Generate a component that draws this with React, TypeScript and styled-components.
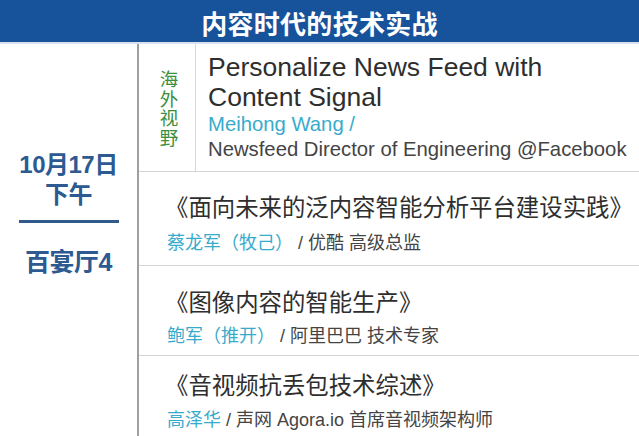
import React from 'react'
import styled, { createGlobalStyle } from 'styled-components'

const GlobalStyle = createGlobalStyle`
  html, body {
    margin: 0;
    padding: 0;
    background: #fff;
    overflow: hidden;
  }
  body {
    font-family: 'Liberation Sans', 'Noto Sans CJK SC', sans-serif;
  }
`

const Page = styled.div`
  width: 639px;
  height: 436px;
  overflow: hidden;
  display: flex;
  flex-direction: column;
`

const Header = styled.header`
  height: 44px;
  flex: none;
  background: #16539b;
  border-bottom: 2px solid #d7e3ef;
  display: flex;
  align-items: center;
  justify-content: center;
  padding-top: 3px;
  box-sizing: border-box;
  color: #fff;
  font-size: 26px;
  font-weight: bold;
  letter-spacing: 0.3px;
`

const Body = styled.div`
  flex: 1;
  display: grid;
  grid-template-columns: 139px 1fr;
`

const DateCol = styled.div`
  border-right: 2px solid #a0a0a0;
  display: flex;
  flex-direction: column;
  align-items: center;
  padding-top: 106px;
  color: #2c5a91;
  font-weight: bold;
`

const DateText = styled.div<{ $fs: number }>`
  font-size: ${({ $fs }) => $fs}px;
  line-height: 30px;
  text-align: center;
  letter-spacing: -0.5px;
`

const Rule = styled.div`
  width: 100px;
  height: 3px;
  background: #2f5a8a;
  margin: 10px 0 24px 1px;
`

const Sessions = styled.div`
  display: flex;
  flex-direction: column;
`

const Row = styled.div<{ $h: number }>`
  height: ${({ $h }) => $h}px;
  flex: none;
  box-sizing: border-box;
  border-bottom: 1px solid #d4d4d4;
  display: flex;
`

const Tag = styled.div`
  width: 56px;
  flex: none;
  border-right: 1px solid #d8d8d8;
  display: flex;
  align-items: center;
  justify-content: center;
  padding-top: 2px;
  writing-mode: vertical-rl;
  color: #3b8f3b;
  font-size: 18.5px;
  line-height: 20px;
  letter-spacing: 1px;
`

const Talk = styled.div<{ $pl: number; $pt: number }>`
  padding-left: ${({ $pl }) => $pl}px;
  padding-top: ${({ $pt }) => $pt}px;
`

const EnTitle = styled.div`
  font-family: 'Liberation Sans', sans-serif;
  font-size: 26.5px;
  line-height: 30px;
  color: #2e2e2e;
`

const CnTitle = styled.div`
  font-size: 23.4px;
  line-height: 30px;
  color: #2e2e2e;
  margin-left: -2px;
`

const Speaker = styled.div<{ $fs: number; $mt: number }>`
  font-size: ${({ $fs }) => $fs}px;
  line-height: 25px;
  margin-top: ${({ $mt }) => $mt}px;
  color: #444;
`

const Name = styled.span`
  color: #38abcc;
`

const talks = [
  { title: '《面向未来的泛内容智能分析平台建设实践》', name: '蔡龙军（牧己）', rest: ' / 优酷 高级总监', h: 94, pt: 21, mt: 8 },
  { title: '《图像内容的智能生产》', name: '鲍军（推开）', rest: ' / 阿里巴巴 技术专家', h: 90, pt: 22, mt: 6 },
  { title: '《音视频抗丢包技术综述》', name: '高泽华', rest: ' / 声网 Agora.io 首席音视频架构师', h: 90, pt: 15, mt: 7 },
]

export default function App() {
  return (
    <Page>
      <GlobalStyle />
      <Header>内容时代的技术实战</Header>
      <Body>
        <DateCol>
          <DateText $fs={24}>
            10月17日
            <br />
            下午
          </DateText>
          <Rule />
          <DateText $fs={25}>百宴厅4</DateText>
        </DateCol>
        <Sessions>
          <Row $h={128}>
            <Tag>海外视野</Tag>
            <Talk $pl={12} $pt={8}>
              <EnTitle>
                Personalize News Feed with
                <br />
                Content Signal
              </EnTitle>
              <Speaker $fs={20.3} $mt={0}>
                <Name>Meihong Wang /</Name>
                <br />
                Newsfeed Director of Engineering @Facebook
              </Speaker>
            </Talk>
          </Row>
          {talks.map((t, i) => (
            <Row key={i} $h={t.h}>
              <Talk $pl={28} $pt={t.pt}>
                <CnTitle>{t.title}</CnTitle>
                <Speaker $fs={18} $mt={t.mt}>
                  <Name>{t.name}</Name>
                  {t.rest}
                </Speaker>
              </Talk>
            </Row>
          ))}
        </Sessions>
      </Body>
    </Page>
  )
}
